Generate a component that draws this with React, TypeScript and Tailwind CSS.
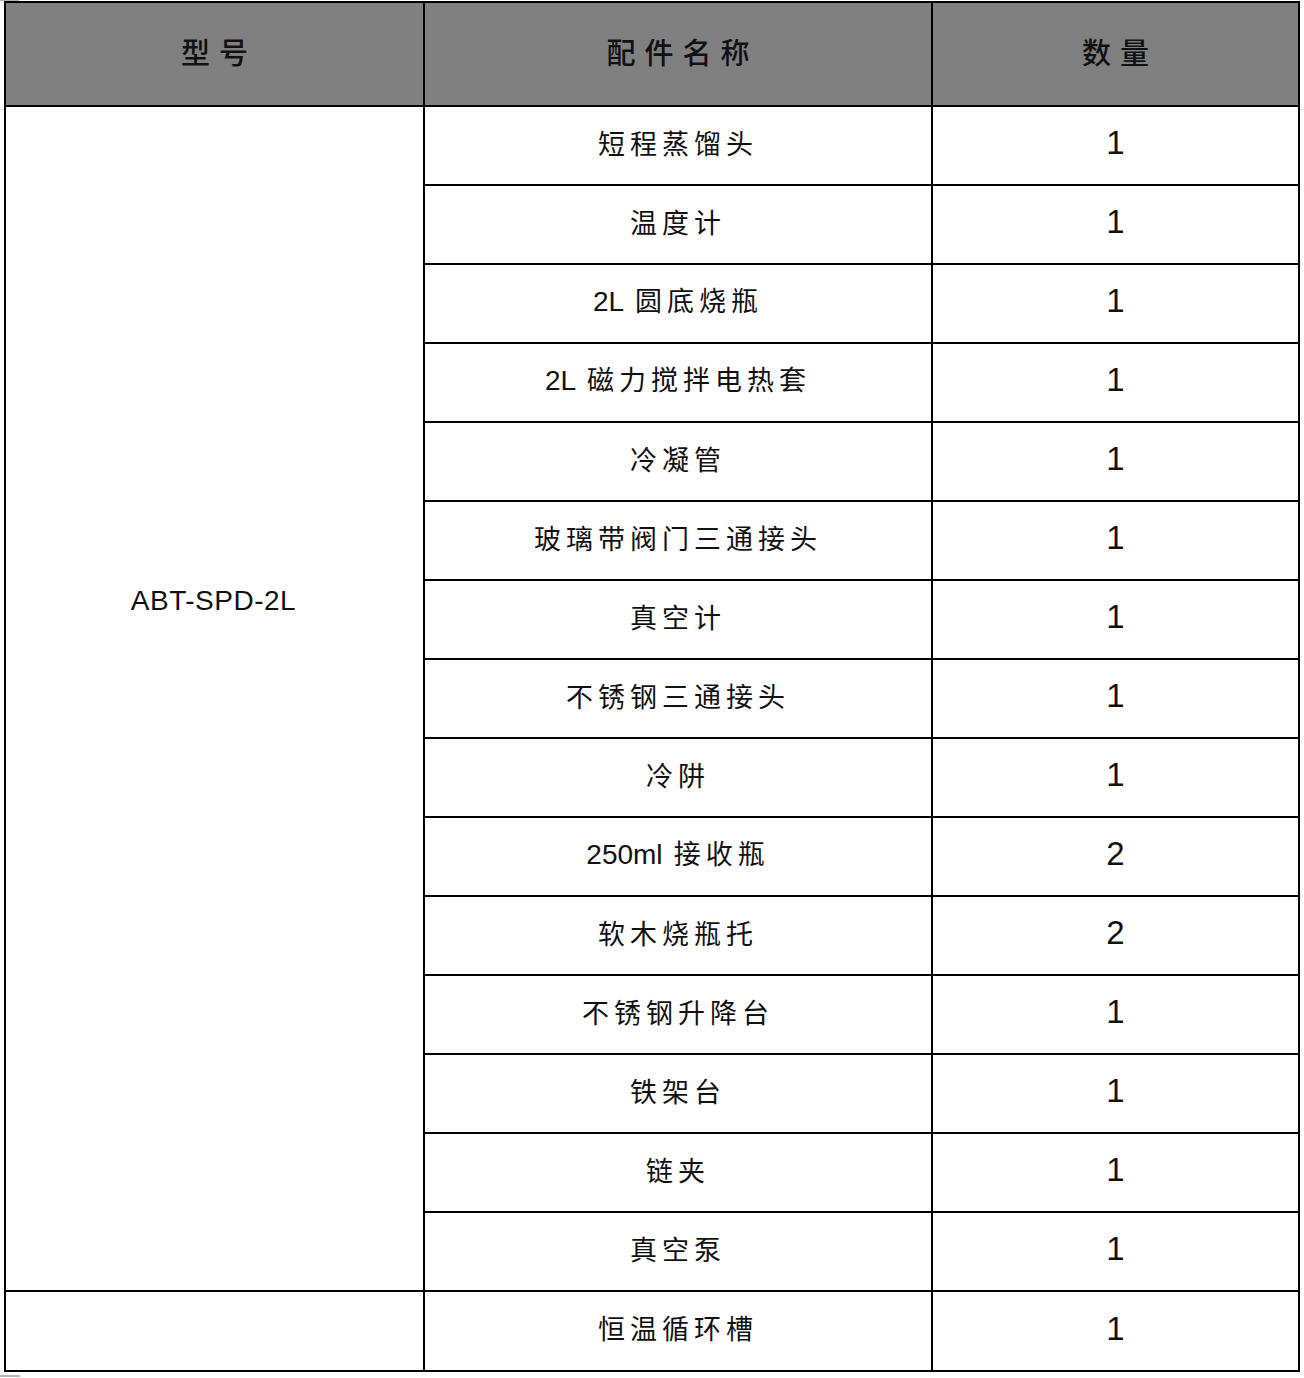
import React from 'react';

const ROWS: { name: string; qty: string }[] = [
  { name: '短程蒸馏头', qty: '1' },
  { name: '温度计', qty: '1' },
  { name: '2L 圆底烧瓶', qty: '1' },
  { name: '2L 磁力搅拌电热套', qty: '1' },
  { name: '冷凝管', qty: '1' },
  { name: '玻璃带阀门三通接头', qty: '1' },
  { name: '真空计', qty: '1' },
  { name: '不锈钢三通接头', qty: '1' },
  { name: '冷阱', qty: '1' },
  { name: '250ml 接收瓶', qty: '2' },
  { name: '软木烧瓶托', qty: '2' },
  { name: '不锈钢升降台', qty: '1' },
  { name: '铁架台', qty: '1' },
  { name: '链夹', qty: '1' },
  { name: '真空泵', qty: '1' },
];

const latin = "font-['Liberation_Sans',sans-serif] tracking-normal text-[28px]";

// split Latin runs from CJK runs so spacing only goes on the Chinese glyphs
function Label({ text }: { text: string }) {
  const parts = text.split(/([A-Za-z0-9\-]+)/).filter(Boolean);
  return (
    <span>
      {parts.map((p, i) =>
        /[A-Za-z0-9]/.test(p) ? (
          <span key={i} className={latin}>
            {p}
          </span>
        ) : (
          <span key={i} className="tracking-[5px]">
            {p}
          </span>
        )
      )}
    </span>
  );
}

export default function App() {
  return (
    <div className="relative w-[1304px] h-[1378px] bg-white pt-px pl-[4px] font-['Noto_Sans_CJK_SC',sans-serif] text-[27px] text-[#111]">
      <div className="absolute left-0 top-0 w-[19px] h-px bg-[#b5b5b5]" />
      <div className="absolute left-0 top-[1375px] w-[20px] h-[2px] bg-[#b5b5b5]" />
      <table className="border-collapse border-2 border-black w-[1294px] table-fixed">
        <colgroup>
          <col className="w-[419px]" />
          <col className="w-[508px]" />
          <col className="w-[367px]" />
        </colgroup>
        <thead>
          <tr className="h-[104px] bg-[#808080]">
            <th className="border-2 border-black font-medium text-[29px] tracking-[9px] pl-[9px] pb-[4px]">型号</th>
            <th className="border-2 border-black font-medium text-[29px] tracking-[9px] pl-[9px] pb-[4px]">配件名称</th>
            <th className="border-2 border-black font-medium text-[29px] tracking-[9px] pl-[9px] pb-[4px]">数量</th>
          </tr>
        </thead>
        <tbody>
          {ROWS.map((r, i) => (
            <tr key={i} className="h-[79px]">
              {i === 0 && (
                <td rowSpan={ROWS.length} className="border-2 border-black align-top text-center pt-[472px] pr-[2px]">
                  <span className="font-['Liberation_Sans',sans-serif] text-[28px] tracking-[0.5px]">
                    ABT-SPD-2L
                  </span>
                </td>
              )}
              <td className="border-2 border-black text-center pb-[5px]">
                <Label text={r.name} />
              </td>
              <td className="border-2 border-black text-center pb-[5px]">
                <span className="font-['Liberation_Sans',sans-serif] text-[33px]">{r.qty}</span>
              </td>
            </tr>
          ))}
          <tr className="h-[80px]">
            <td className="border-2 border-black" />
            <td className="border-2 border-black text-center pb-[5px]">
              <Label text="恒温循环槽" />
            </td>
            <td className="border-2 border-black text-center pb-[5px]">
              <span className="font-['Liberation_Sans',sans-serif] text-[33px]">1</span>
            </td>
          </tr>
        </tbody>
      </table>
    </div>
  );
}
